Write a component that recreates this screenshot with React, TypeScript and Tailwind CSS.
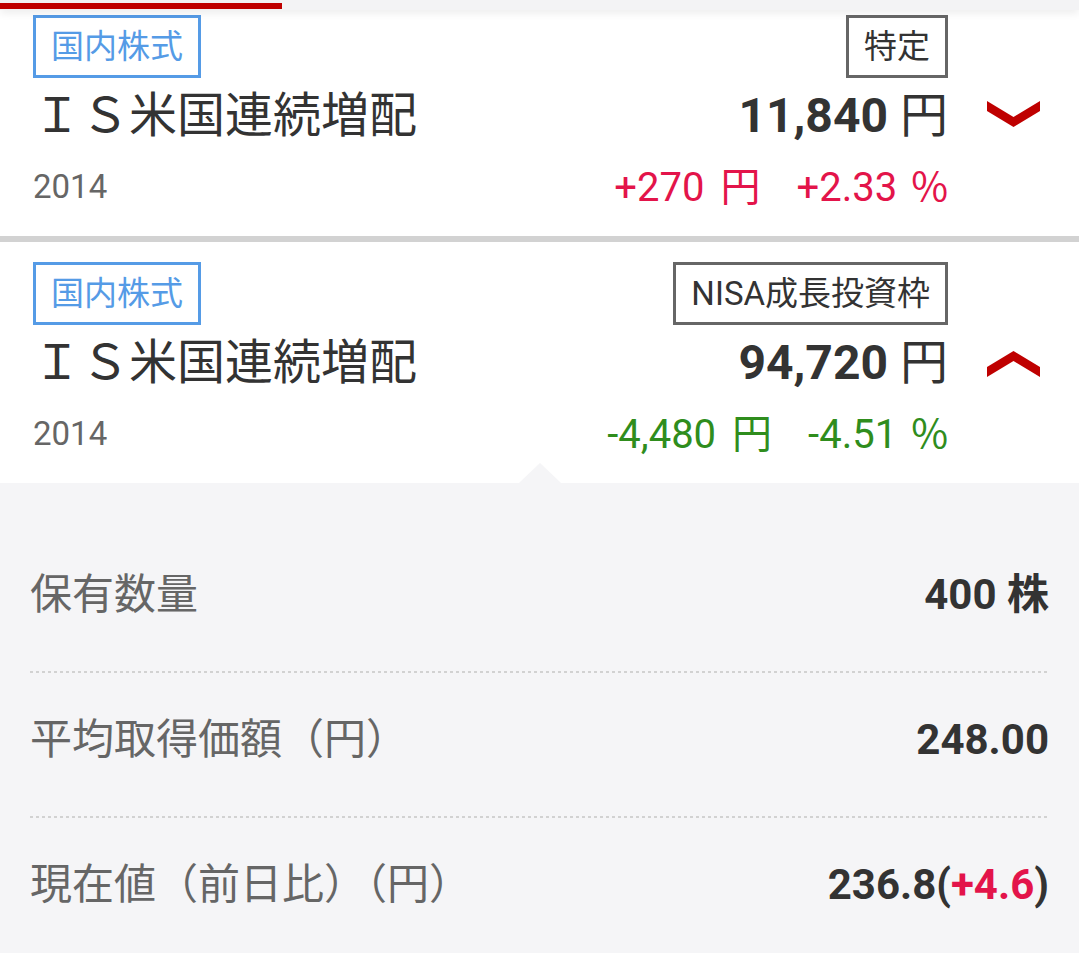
type Holding = {
  account: string;
  price: string;
  change: string;
  pct: string;
  up: boolean;
  open: boolean;
};

const holdings: Holding[] = [
  { account: "特定", price: "11,840", change: "+270", pct: "+2.33", up: true, open: false },
  { account: "NISA成長投資枠", price: "94,720", change: "-4,480", pct: "-4.51", up: false, open: true },
];

const Chevron = ({ open }: { open: boolean }) => (
  <svg width="53" height="26" viewBox="0 0 53 26" className="block">
    {open ? (
      <polygon points="0,16 26.5,0 53,16 53,26 26.5,10 0,26" fill="#bf0000" />
    ) : (
      <polygon points="0,0 26.5,16 53,0 53,10 26.5,26 0,10" fill="#bf0000" />
    )}
  </svg>
);

const HoldingCard = ({ h, first }: { h: Holding; first: boolean }) => (
  <div className={`relative flex bg-white ${first ? "pt-[5px]" : "pt-5"}`}>
    <div className="flex-1 pl-[33px] pb-[18px]">
      {/* バッジ */}
      <div className="flex h-[63px] items-stretch justify-between">
        <span className="flex items-center border-[3px] border-[#559be6] px-[15px] text-[33px] leading-none text-[#559be6]">
          国内株式
        </span>
        <span className="flex items-center border-[3px] border-[#666] px-[15px] text-[33px] leading-none text-[#333]">
          {h.account}
        </span>
      </div>

      {/* 銘柄名と評価額 */}
      <div className="flex h-[76px] items-center justify-between">
        <span className="text-[48px] leading-none text-[#333]">ＩＳ米国連続増配</span>
        <span className="text-[48px] leading-none text-[#333]">
          <span className="font-bold">{h.price}</span>
          <span className="ml-[12px]">円</span>
        </span>
      </div>

      {/* コードと損益 */}
      <div className="flex h-[64px] items-center justify-between">
        <span className="text-[33px] leading-none text-[#666]">2014</span>
        <span className={`text-[40px] leading-none ${h.up ? "text-[#e3144a]" : "text-[#2f8d1d]"}`}>
          {h.change}
          <span className="ml-[16px]">円</span>
          <span className="ml-[36px]">{h.pct}</span>
          <span className="ml-[14px] font-['Noto_Sans_CJK_JP',sans-serif]">%</span>
        </span>
      </div>
    </div>

    <div className="flex w-[131px] justify-center">
      <div className={h.open ? "mt-[89px]" : "mt-[86px]"}>
        <Chevron open={h.open} />
      </div>
    </div>

    {h.open && (
      <div className="absolute bottom-0 left-[519px] h-0 w-0 border-r-[21px] border-b-[20px] border-l-[21px] border-r-transparent border-b-[#f5f5f7] border-l-transparent" />
    )}
  </div>
);

const Dotted = () => (
  <div className="h-[2px] bg-[linear-gradient(to_right,#d2d2d2_50%,transparent_50%)] bg-[length:6px_2px] bg-repeat-x" />
);

const DetailRow = ({ label, children }: { label: string; children: React.ReactNode }) => (
  <div className="flex h-[143px] items-center justify-between pb-[10px]">
    <span className="text-[42px] leading-none text-[#666]">{label}</span>
    <span className="text-[42px] font-bold leading-none text-[#333]">{children}</span>
  </div>
);

export default function App() {
  return (
    <div className="h-[953px] overflow-hidden bg-[#f5f5f7] font-['Roboto','Noto_Sans_CJK_JP',sans-serif]">
      {/* タブ */}
      <div className="relative z-10 h-[10px] bg-[#f3f3f5] pt-[3px] shadow-[0_3px_8px_rgba(0,0,0,0.08)]">
        <div className="h-[6px] w-[282px] bg-[#bf0000]" />
      </div>

      <HoldingCard h={holdings[0]} first />
      <div className="h-[6px] bg-[#d2d2d2]" />
      <HoldingCard h={holdings[1]} first={false} />

      {/* 詳細 */}
      <div className="bg-[#f5f5f7] px-[30px] pt-[45px]">
        <DetailRow label="保有数量">400 株</DetailRow>
        <Dotted />
        <DetailRow label="平均取得価額（円）">248.00</DetailRow>
        <Dotted />
        <DetailRow label="現在値（前日比）（円）">
          236.8(<span className="text-[#e3144a]">+4.6</span>)
        </DetailRow>
      </div>
    </div>
  );
}
